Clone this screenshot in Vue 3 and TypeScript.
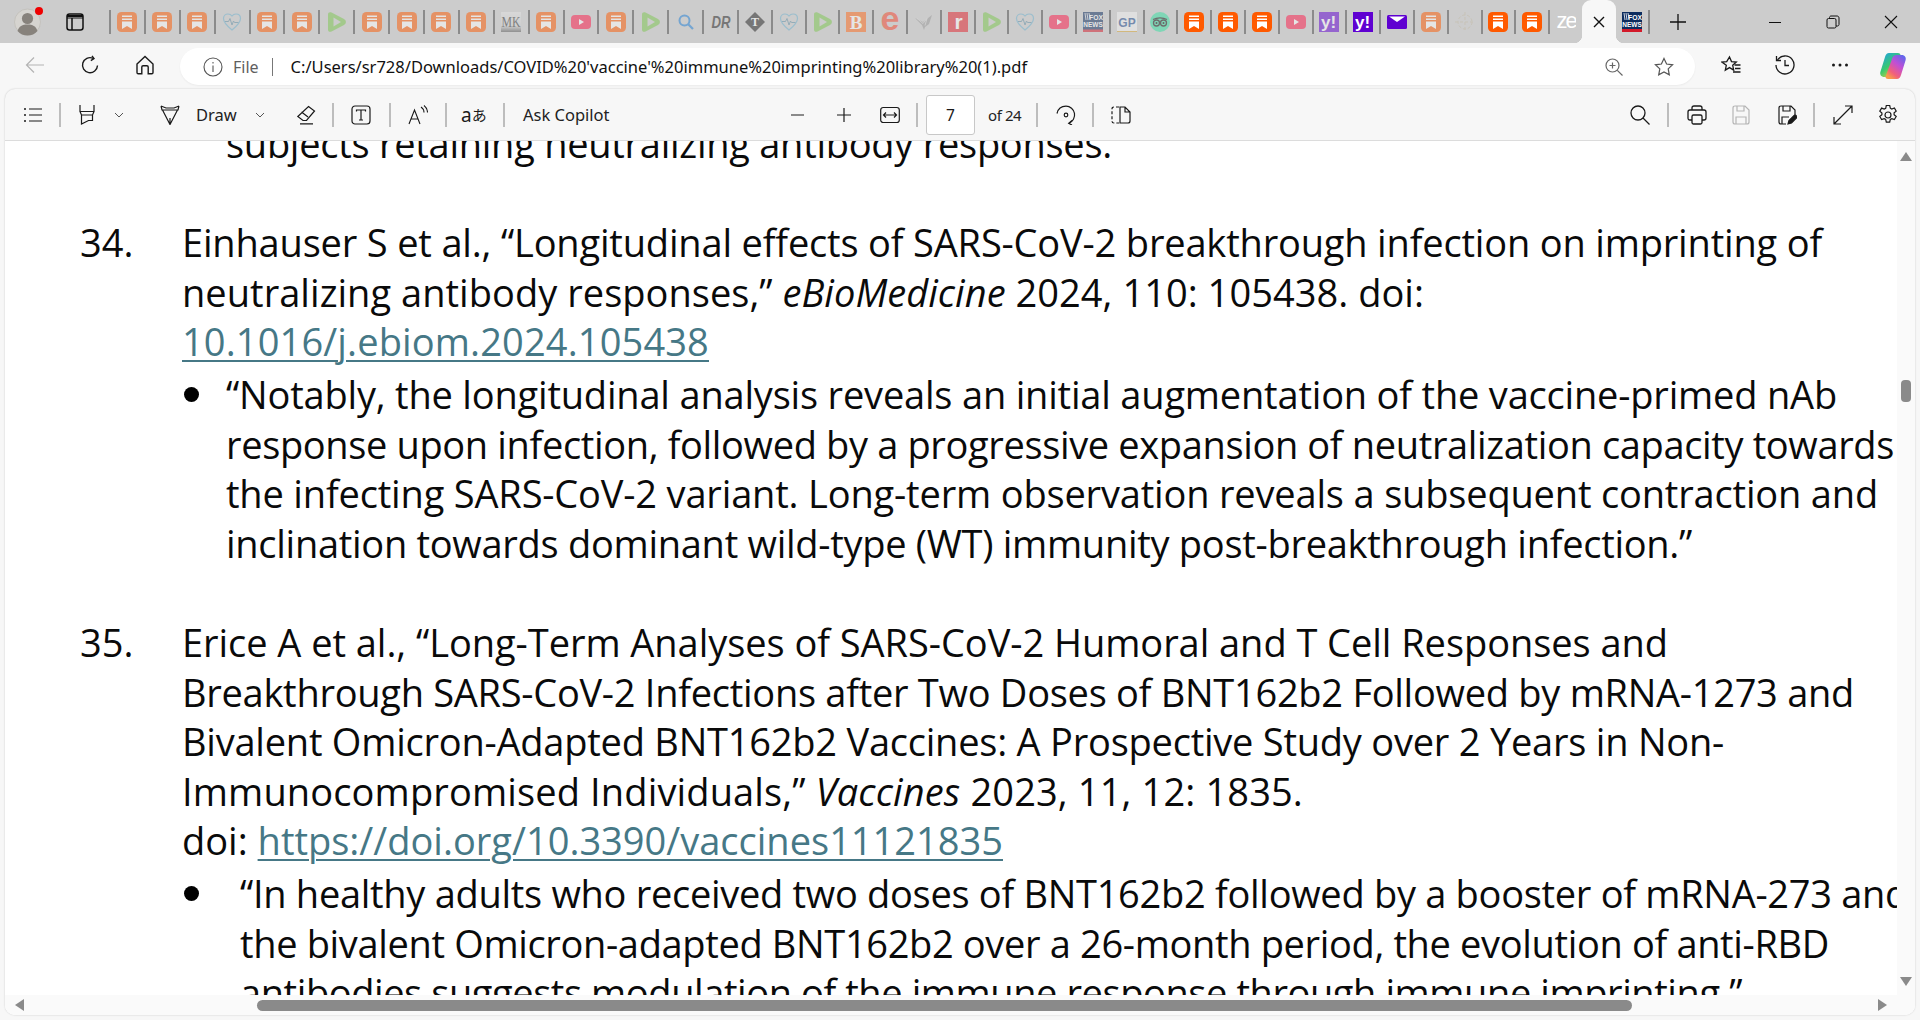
<script setup lang="ts">
import { onMounted, ref } from 'vue'

type Part = { t: string; c?: string }
type Line = { w: number; parts: Part[] }
type Entry = { num: string; lines: Line[]; bullets: Line[]; wide?: boolean }

const tabs: string[] = ['bm','bm','bm','heart','bm','bm','play','bm','bm','bm','bm','mk','bm','yt','bm','play','search','dr','t','heart','play','b','e','bird','r','play','heart','yt','fox','gp','owl','bmh','bmh','bmh','yt','ya','yb','mail','bm','target','bmh','bmh','ze']

const p = (w: number, t: string): Line => ({ w, parts: [{ t }] })

const leadIn: Line = p(886, 'subjects retaining neutralizing antibody responses.')

const entries: Entry[] = [
  {
    num: '34.',
    lines: [
      p(1640, 'Einhauser S et al., “Longitudinal effects of SARS-CoV-2 breakthrough infection on imprinting of'),
      { w: 1242, parts: [{ t: 'neutralizing antibody responses,” ' }, { t: 'eBioMedicine', c: 'em' }, { t: ' 2024, 110: 105438. doi:' }] },
      { w: 527, parts: [{ t: '10.1016/j.ebiom.2024.105438', c: 'link' }] }
    ],
    bullets: [
      p(1611, '“Notably, the longitudinal analysis reveals an initial augmentation of the vaccine-primed nAb'),
      p(1668, 'response upon infection, followed by a progressive expansion of neutralization capacity towards'),
      p(1652, 'the infecting SARS-CoV-2 variant. Long-term observation reveals a subsequent contraction and'),
      p(1466, 'inclination towards dominant wild-type (WT) immunity post-breakthrough infection.”')
    ]
  },
  {
    num: '35.',
    wide: true,
    lines: [
      p(1486, 'Erice A et al., “Long-Term Analyses of SARS-CoV-2 Humoral and T Cell Responses and'),
      p(1672, 'Breakthrough SARS-CoV-2 Infections after Two Doses of BNT162b2 Followed by mRNA-1273 and'),
      p(1542, 'Bivalent Omicron-Adapted BNT162b2 Vaccines: A Prospective Study over 2 Years in Non-'),
      { w: 1121, parts: [{ t: 'Immunocompromised Individuals,” ' }, { t: 'Vaccines', c: 'em' }, { t: ' 2023, 11, 12: 1835.' }] },
      { w: 821, parts: [{ t: 'doi: ' }, { t: 'https://doi.org/10.3390/vaccines11121835', c: 'link' }] }
    ],
    bullets: [
      p(1668, '“In healthy adults who received two doses of BNT162b2 followed by a booster of mRNA-273 and'),
      p(1589, 'the bivalent Omicron-adapted BNT162b2 over a 26-month period, the evolution of anti-RBD'),
      p(1502, 'antibodies suggests modulation of the immune response through immune imprinting.”')
    ]
  }
]

const root = ref<HTMLElement | null>(null)

// Each line of the PDF is set to its measured width on the page.
onMounted(() => {
  root.value?.querySelectorAll<HTMLElement>('[data-w]').forEach((el) => {
    const width = el.getBoundingClientRect().width
    const chars = (el.textContent ?? '').length
    el.style.letterSpacing = `${(Number(el.dataset.w) - width) / chars}px`
  })
})
</script>

<template>
  <div ref="root" class="win">
    <header class="strip">
      <svg class="avatar" width="27" height="28" viewBox="0 0 27 28">
        <circle cx="13.5" cy="14" r="13" fill="#d6d4d0" stroke="#c4c2bd" />
        <circle cx="13.5" cy="10.5" r="5.6" fill="#87827c" />
        <path d="M3.5 23c1.4-5 5-6.6 10-6.6s8.600 1.600 10 6.600c-2.600 3-6 4.500-10 4.500s-7.400-1.500-10-4.500z" fill="#87827c" />
      </svg>
      <span class="red-dot"></span>
      <svg class="tab-actions" width="18" height="18" viewBox="0 0 18 18" fill="none" stroke="#111" stroke-width="1.500">
        <rect x="1" y="1" width="16" height="16" rx="2.500" />
        <path d="M1 3.500h16M1 2.500h16M1 5h16" stroke-width="1.200" />
        <path d="M6 5v12" />
      </svg>

      <div v-for="(k, i) in tabs" :key="i" class="tab" :class="{ narrow: i > 17 }">
        <svg width="20" height="20" viewBox="0 0 20 20" :class="{ dim: !['bmh', 'yb', 'mail', 'ze'].includes(k) }">
          <template v-if="k === 'bm' || k === 'bmh'">
            <rect width="20" height="20" rx="4.500" fill="#ff5a00" />
            <path d="M5 3.500h10V5H5zM5 6.500h10V8H5zM5 9.500h10V17l-5-3-5 3z" fill="#fff" />
          </template>
          <template v-else-if="k === 'heart'">
            <path d="M10 18C5 14 1.500 10.500 1.500 6.500 1.500 3.500 3.700 2 6 2c1.800 0 3.100.800 4 2 .900-1.200 2.200-2 4-2 2.300 0 4.500 1.500 4.500 4.500C18.500 10.500 15 14 10 18z" fill="none" stroke="#6db2cf" stroke-width="1.200" />
            <path d="M3 9.500h3.500l1.500-3 2 6.500 1.500-4 1 1.500h4" fill="none" stroke="#5d8ea5" stroke-width="1" />
          </template>
          <template v-else-if="k === 'play'">
            <path d="M1 2.500C1 .500 2.500-.3 4.500.500L17 7c2.500 1.500 2.500 4.500 0 6L4.500 19.500c-2 .800-3.500 0-3.500-2z" fill="#7cc74e" />
            <path d="M6.500 5.500 14 10l-7.500 4.500z" fill="#ccc" />
          </template>
          <template v-else-if="k === 'mk'">
            <rect width="20" height="20" fill="url(#mkg)" />
            <defs><linearGradient id="mkg" x1="0" y1="0" x2="0" y2="1"><stop offset="0" stop-color="#e4e4e4" /><stop offset=".7" stop-color="#cfcfcf" /><stop offset="1" stop-color="#555" /></linearGradient></defs>
            <text x="10" y="15" text-anchor="middle" class="ic-serif" font-size="15" textLength="19" lengthAdjust="spacingAndGlyphs" fill="#333">MK</text>
          </template>
          <template v-else-if="k === 'yt'">
            <rect y="3" width="20" height="14" rx="4" fill="#ff1a4a" />
            <path d="M8 7l5 3-5 3z" fill="#fff" />
          </template>
          <template v-else-if="k === 'search'">
            <circle cx="8.500" cy="8.500" r="5" fill="none" stroke="#1f7fd6" stroke-width="2" />
            <path d="M12 12l5 5" stroke="#1f7fd6" stroke-width="2.200" />
          </template>
          <template v-else-if="k === 'dr'">
            <text x="10" y="16" text-anchor="middle" class="ic-bold ic-i" font-size="16" textLength="19" lengthAdjust="spacingAndGlyphs" fill="#222">DR</text>
          </template>
          <template v-else-if="k === 't'">
            <path d="M10 0l10 10-10 10L0 10z" fill="#222" />
            <text x="10" y="14" text-anchor="middle" class="ic-serif" font-size="12" font-weight="700" fill="#fff">T</text>
          </template>
          <template v-else-if="k === 'b'">
            <rect width="20" height="20" fill="#ff6a1a" />
            <text x="10" y="16.500" text-anchor="middle" class="ic-serif" font-size="19" font-weight="700" fill="#fff">B</text>
          </template>
          <template v-else-if="k === 'e'">
            <text x="10" y="18" text-anchor="middle" class="ic-bold" font-size="34" fill="#f4472d">e</text>
          </template>
          <template v-else-if="k === 'bird'">
            <path d="M1 6l8 4 9-7-3 9-4 3-1 3-2-5z" fill="#999" />
            <path d="M3 6.500l6 5 4-5-2 7" fill="none" stroke="#ddd" stroke-width=".8" />
          </template>
          <template v-else-if="k === 'r'">
            <rect width="20" height="20" fill="#e3222c" />
            <text x="10.500" y="17" text-anchor="middle" class="ic-bold" font-size="21" fill="#fff">r</text>
          </template>
          <template v-else-if="k === 'fox'">
            <rect width="20" height="20" fill="#0d2c5e" />
            <rect y="17.500" width="20" height="2.500" fill="#d31a2a" />
            <path d="M2 1l1 7M4 1l1 7M6 1l1 6" stroke="#fff" stroke-width=".8" />
            <text x="13" y="8" text-anchor="middle" class="ic-bold" font-size="6.800" fill="#fff">FOX</text>
            <text x="10" y="15" text-anchor="middle" class="ic-bold" font-size="6.500" fill="#fff">NEWS</text>
          </template>
          <template v-else-if="k === 'gp'">
            <rect width="20" height="20" fill="#f2f2f2" />
            <path d="M0 19h20v1H0z" fill="#d9a630" />
            <text x="10" y="15" text-anchor="middle" class="ic-bold" font-size="12" fill="#1d4a8f">GP</text>
          </template>
          <template v-else-if="k === 'owl'">
            <circle cx="10" cy="10" r="10" fill="#34e0a1" />
            <circle cx="6.500" cy="11" r="3" fill="none" stroke="#111" stroke-width="1.300" />
            <circle cx="13.500" cy="11" r="3" fill="none" stroke="#111" stroke-width="1.300" />
            <path d="M3 7.500c4-2 10-2 14 0" fill="none" stroke="#111" stroke-width="1.300" />
            <circle cx="6.500" cy="11" r="1" /><circle cx="13.500" cy="11" r="1" />
          </template>
          <template v-else-if="k === 'ya' || k === 'yb'">
            <rect width="20" height="20" fill="#5f01d1" />
            <text x="9.500" y="15.500" text-anchor="middle" class="ic-bold" font-size="17" fill="#fff">y!</text>
          </template>
          <template v-else-if="k === 'mail'">
            <rect y="3" width="20" height="14" rx="1.500" fill="#5f01d1" />
            <path d="M2 4.500h16L10 10z" fill="#fff" />
          </template>
          <template v-else-if="k === 'target'">
            <g fill="none" stroke="#c5bca5" stroke-width="1" stroke-dasharray="3 2">
              <circle cx="10" cy="10" r="7" />
              <path d="M10 0v20M0 10h20" />
            </g>
          </template>
          <template v-else-if="k === 'ze'">
            <text x="10" y="16" text-anchor="middle" class="ic-sans" font-size="22" letter-spacing="-2" fill="#fff">ze</text>
          </template>
        </svg>
      </div>

      <div class="active-tab">
        <svg width="14" height="14" viewBox="0 0 14 14" stroke="#111" stroke-width="1.400"><path d="M2 2l10 10M12 2L2 12" /></svg>
      </div>
      <div class="tab last">
        <svg width="20" height="20" viewBox="0 0 20 20">
          <rect width="20" height="20" fill="#0d2c5e" />
          <rect y="17" width="20" height="3" fill="#d31a2a" />
          <path d="M2 1l1 7M4 1l1 7M6 1l1 6" stroke="#fff" stroke-width=".8" />
          <text x="13" y="8" text-anchor="middle" class="ic-bold" font-size="6.800" fill="#fff">FOX</text>
          <text x="10" y="15" text-anchor="middle" class="ic-bold" font-size="6.500" fill="#fff">NEWS</text>
        </svg>
      </div>
      <svg class="plus" width="18" height="18" viewBox="0 0 18 18" stroke="#111" stroke-width="1.300"><path d="M9 1v16M1 9h16" /></svg>
      <div class="win-ctl">
        <button><svg width="14" height="14" viewBox="0 0 14 14" stroke="#111"><path d="M1 7.500h12" /></svg></button>
        <button><svg width="14" height="14" viewBox="0 0 14 14" fill="none" stroke="#111"><rect x="1" y="3.500" width="9" height="9.500" rx="1.500" /><path d="M3.500 3.500V2.500c0-.8.700-1.500 1.500-1.500h6c1 0 2 .700 2 2v6.500c0 .8-.700 1.500-1.500 1.500H10" /></svg></button>
        <button><svg width="14" height="14" viewBox="0 0 14 14" stroke="#111" stroke-width="1.100"><path d="M1 1l12 12M13 1L1 13" /></svg></button>
      </div>
    </header>

    <nav class="addr">
      <svg class="ai" width="20" height="20" viewBox="0 0 20 20" fill="none" stroke="#b4b4b4" stroke-width="1.200"><path d="M19 10H1.500M9 2.500 1.500 10 9 17.500" /></svg>
      <svg class="ai gap" width="20" height="20" viewBox="0 0 20 20" fill="none" stroke="#1a1a1a" stroke-width="1.400"><path d="M17.500 10.500A7.500 7.500 0 1 1 13 3.300" /><path d="M12 .800 14 3.500 10.800 5.600" /></svg>
      <svg class="ai gap" width="20" height="20" viewBox="0 0 20 20" fill="none" stroke="#1a1a1a" stroke-width="1.400"><path d="M2 9l8-7.500L18 9v8.500c0 .8-.5 1.200-1.200 1.200h-3.600V12c0-.8-.5-1.300-1.300-1.300H8.100c-.8 0-1.300.5-1.300 1.300v6.700H3.200c-.7 0-1.200-.4-1.200-1.200z" /></svg>
      <div class="pill">
        <svg width="20" height="20" viewBox="0 0 20 20" fill="none" stroke="#555" stroke-width="1.100"><circle cx="10" cy="10" r="9" /><path d="M10 8.500V15M10 5v1.500" /></svg>
        <span class="file">File</span>
        <span class="pill-sep"></span>
        <span class="url">C:/Users/sr728/Downloads/COVID%20'vaccine'%20immune%20imprinting%20library%20(1).pdf</span>
        <svg class="zoom-ic" width="18" height="18" viewBox="0 0 18 18" fill="none" stroke="#666" stroke-width="1.200"><circle cx="7.500" cy="7.500" r="6.500" /><path d="M12.300 12.300 17.500 17.500M7.500 4.500v6M4.500 7.500h6" /></svg>
        <svg class="star-ic" width="20" height="20" viewBox="0 0 20 20" fill="none" stroke="#555" stroke-width="1.200"><path d="M10 1.500l2.600 5.500 6 .8-4.400 4.100 1.100 6L10 15l-5.300 2.900 1.100-6L1.400 7.800l6-.8z" /></svg>
      </div>
      <svg class="fav" width="20" height="20" viewBox="0 0 20 20" fill="none" stroke="#1a1a1a" stroke-width="1.300"><path d="M8.500 2l2 4.600 4.800.5-3.600 3.200 1 4.800-4.200-2.500-4.200 2.500 1-4.800L.8 7.100l4.900-.5z" /><path d="M13.500 10h6M14 13.500h5.500M12 17h7.500" /></svg>
      <svg class="hist" width="20" height="20" viewBox="0 0 20 20" fill="none" stroke="#1a1a1a" stroke-width="1.300"><path d="M2.500 5A9 9 0 1 1 1 10" /><path d="M1.500 1v4.500H6M10 5v5.500h4" /></svg>
      <svg class="dots" width="20" height="20" viewBox="0 0 20 20" fill="#1a1a1a"><circle cx="3.500" cy="10" r="1.500" /><circle cx="10" cy="10" r="1.500" /><circle cx="16.500" cy="10" r="1.500" /></svg>
      <svg class="copilot" width="28" height="28" viewBox="0 0 28 28">
        <defs>
          <linearGradient id="cpa" x1="0" y1="0" x2=".7" y2="1"><stop offset="0" stop-color="#1f9cf0" /><stop offset=".55" stop-color="#38c96e" /><stop offset="1" stop-color="#f4d03a" /></linearGradient>
          <linearGradient id="cpb" x1="1" y1="0" x2=".3" y2="1"><stop offset="0" stop-color="#4a6cf0" /><stop offset=".45" stop-color="#c04fd6" /><stop offset=".8" stop-color="#f2607a" /><stop offset="1" stop-color="#f79b4b" /></linearGradient>
        </defs>
        <path d="M10 1h9c1.500 0 2.200.8 2.600 2L15 21c-.7 2.500-2 4-5 4H5.500C2 25 .500 22.500 1.500 19.500L6 5c.8-2.500 2-4 4-4z" fill="url(#cpa)" />
        <path d="M18 27H9c-1.500 0-2.200-.8-2.600-2L13 7c.7-2.500 2-4 5-4h4.500c3.500 0 5 2.500 4 5.500L22 23c-.8 2.500-2 4-4 4z" fill="url(#cpb)" />
      </svg>
    </nav>

    <main class="card">
      <div class="bar">
        <svg class="t-list" viewBox="0 0 20 20" fill="#1a1a1a"><circle cx="2" cy="4" r="1" /><circle cx="2" cy="10" r="1" /><circle cx="2" cy="16" r="1" /><path d="M6 3.500h13v1H6zM6 9.500h13v1H6zM6 15.500h13v1H6z" /></svg>
        <i class="sep s1"></i>
        <svg class="t-hl" viewBox="0 0 20 20" fill="none" stroke="#1a1a1a" stroke-width="1.200"><path d="M3 0v6.500h14V0M3 6.500l1.500 3.500h11L17 6.500M4.500 10v9l7-3.500h4V10" /></svg>
        <svg class="t-chev" viewBox="0 0 10 10" fill="none" stroke="#555"><path d="M1 3l4 4 4-4" /></svg>
        <svg class="t-draw" viewBox="0 0 20 20" fill="none" stroke="#1a1a1a" stroke-width="1.200"><path d="M1 1l5 2h8l5-2M1 1l1 4h16l1-4M2.500 5L10 19.500 17.500 5M10 19.500V13" /></svg>
        <span class="lab t-lab">Draw</span>
        <svg class="t-chev2" viewBox="0 0 10 10" fill="none" stroke="#555"><path d="M1 3l4 4 4-4" /></svg>
        <svg class="t-er" viewBox="0 0 20 20" fill="none" stroke="#1a1a1a" stroke-width="1.200"><path d="M12.500 1.500 18.500 6l-8 9.500H7L1.800 11.500zM5.500 7 12 12M4 18.800h13" /></svg>
        <i class="sep s2"></i>
        <svg class="t-tx" viewBox="0 0 20 20" fill="none" stroke="#1a1a1a" stroke-width="1.200"><rect x="1" y="1" width="18" height="18" rx="3" /><path d="M5.500 6.500V5h9v1.500M10 5v10M8 15h4" /></svg>
        <i class="sep s3"></i>
        <svg class="t-read" viewBox="0 0 20 20" fill="none" stroke="#1a1a1a" stroke-width="1.100"><path d="M1 19 6.500 5 12 19M3 14h7M13 2c2 1.300 3 3 3 5.500M16 .5c2.500 2 3.500 4.500 3.500 7" /></svg>
        <i class="sep s4"></i>
        <span class="t-tr"><span class="tr-a">a</span><span class="tr-j">あ</span></span>
        <i class="sep s5"></i>
        <span class="lab t-ask">Ask Copilot</span>
        <svg class="t-min" viewBox="0 0 20 20" stroke="#666" stroke-width="1.300"><path d="M3 10h13" /></svg>
        <svg class="t-plus" viewBox="0 0 20 20" stroke="#1a1a1a" stroke-width="1.200"><path d="M3 10h14M10 3v14" /></svg>
        <svg class="t-fit" viewBox="0 0 20 20" fill="none" stroke="#1a1a1a" stroke-width="1.200"><rect x=".7" y="2.500" width="18.600" height="15" rx="2.500" /><path d="M3.500 10h13M6 7.500 3.500 10 6 12.500M14 7.500l2.500 2.500-2.500 2.500" /></svg>
        <i class="sep s6"></i>
        <div class="page-box">7</div>
        <span class="lab t-of">of 24</span>
        <i class="sep s7"></i>
        <svg class="t-rot" viewBox="0 0 20 20" fill="none" stroke="#1a1a1a" stroke-width="1.200"><path d="M1 8.500C2 4 5.500 1.200 10 1.200a8.800 8.800 0 0 1 3 17" /><circle cx="10" cy="10" r="1.800" /><path d="M16 15.500l-3.300 2.800 3.300 1.700" /></svg>
        <i class="sep s8"></i>
        <svg class="t-two" viewBox="0 0 20 20" fill="none" stroke="#1a1a1a" stroke-width="1.200"><path d="M8 2H3Q1 2 1 4v12q0 2 2 2h5" stroke-dasharray="3 2" /><path d="M9 2h5l5 5v9q0 2-2 2H9zM14 2v5h5" /></svg>
        <div class="bar-right">
          <svg class="t-find" viewBox="0 0 20 20" fill="none" stroke="#1a1a1a" stroke-width="1.300"><circle cx="8" cy="8" r="7" /><path d="M13 13l6.500 6.500" /></svg>
          <i class="sep s9"></i>
          <svg class="t-print" viewBox="0 0 20 20" fill="none" stroke="#1a1a1a" stroke-width="1.300"><path d="M5 5V3q0-2 2-2h6q2 0 2 2v2M5 15H3q-2 0-2-2V7q0-2 2-2h14q2 0 2 2v6q0 2-2 2h-2" /><rect x="5" y="10" width="10" height="9" rx="1.500" /></svg>
          <svg class="t-save" viewBox="0 0 20 20" fill="none" stroke="#b5b5b5" stroke-width="1.200"><path d="M2 3q0-2 2-2h10l4 4v12q0 2-2 2H4q-2 0-2-2zM6 1v5h7V1M5 19v-7h10v7" /></svg>
          <svg class="t-saveas" viewBox="0 0 20 20" fill="none" stroke="#1a1a1a" stroke-width="1.200"><path d="M9 19H4q-2 0-2-2V3q0-2 2-2h10l4 4v4M6 1v5h7V1M5 19v-7h7" /><path d="M11 19l1-3.500 6-6 2.500 2.500-6 6z" fill="#1a1a1a" /></svg>
          <i class="sep s10"></i>
          <svg class="t-exp" viewBox="0 0 20 20" fill="none" stroke="#1a1a1a" stroke-width="1.200"><path d="M19 8V1h-7M19 1 1 19M1 12v7h7" /></svg>
          <svg class="t-gear" viewBox="0 0 20 20" fill="none" stroke="#1a1a1a" stroke-width="1.200"><circle cx="10" cy="10" r="3" /><path d="M8.300 .5h3.400l.6 2.700 1.500.8 2.600-1 1.800 3.100-2.100 1.800v1.800l2.100 1.800-1.800 3.100-2.600-1-1.500.8-.6 2.700H8.300l-.6-2.700-1.500-.8-2.600 1-1.800-3.100 2.100-1.800V8l-2.100-1.800 1.800-3.100 2.600 1 1.500-.8z" /></svg>
        </div>
      </div>

      <div class="view">
        <div class="doc">
          <div class="pdf">
            <div class="body lead">
              <div class="line"><span class="fit" :data-w="leadIn.w">{{ leadIn.parts[0].t }}</span></div>
            </div>
            <section v-for="e in entries" :key="e.num" class="entry">
              <span class="num">{{ e.num }}</span>
              <div class="body">
                <div v-for="(l, i) in e.lines" :key="i" class="line">
                  <span class="fit" :data-w="l.w"><span v-for="(s, j) in l.parts" :key="j" :class="s.c">{{ s.t }}</span></span>
                </div>
                <div class="bullets" :class="{ wide: e.wide }">
                  <span class="dot"></span>
                  <div>
                    <div v-for="(l, i) in e.bullets" :key="i" class="line">
                      <span class="fit" :data-w="l.w">{{ l.parts[0].t }}</span>
                    </div>
                  </div>
                </div>
              </div>
            </section>
          </div>
          <aside class="vbar">
            <svg width="12" height="9" viewBox="0 0 12 9" fill="#8a8a8a"><path d="M6 0l6 9H0z" /></svg>
            <span class="vthumb"></span>
            <svg width="12" height="9" viewBox="0 0 12 9" fill="#8a8a8a"><path d="M6 9 0 0h12z" /></svg>
          </aside>
        </div>
        <div class="hbar">
          <svg width="9" height="12" viewBox="0 0 9 12" fill="#8a8a8a"><path d="M0 6l9-6v12z" /></svg>
          <span class="hthumb"></span>
          <svg width="9" height="12" viewBox="0 0 9 12" fill="#8a8a8a"><path d="M9 6 0 12V0z" /></svg>
        </div>
      </div>
    </main>
  </div>
</template>

<style>
html, body { margin: 0; background: #f7f7f7; }
</style>

<style scoped>
.win {
  width: 1920px;
  height: 1020px;
  display: flex;
  flex-direction: column;
  overflow: hidden;
  background: #f7f7f7;
  font-family: "Noto Sans", "Open Sans", sans-serif;
  color: #1a1a1a;
}

.strip {
  height: 43px;
  flex: none;
  background: #cccccc;
  display: flex;
  align-items: center;
  position: relative;
}
.avatar { margin-left: 14px; flex: none; }
.red-dot {
  position: absolute;
  left: 35px;
  top: 7px;
  width: 8px;
  height: 8px;
  border-radius: 50%;
  background: #ee0000;
}
.tab-actions { margin-left: 25px; flex: none; }
.tab {
  width: 34.9px;
  height: 24px;
  flex: none;
  box-sizing: border-box;
  border-left: 2px solid #8b8b8b;
  display: flex;
  align-items: center;
  justify-content: center;
}
.tab-actions + .tab { margin-left: 25px; }
.tab.narrow { width: 33.8px; }
.dim { opacity: 0.5; }
.ic-serif { font-family: "Liberation Serif", serif; }
.ic-bold { font-family: "Liberation Sans", sans-serif; font-weight: 700; }
.ic-sans { font-family: "Liberation Sans", sans-serif; }
.ic-i { font-style: italic; }

.active-tab {
  width: 34px;
  height: 43px;
  flex: none;
  align-self: flex-end;
  background: #f7f7f7;
  border-radius: 9px 9px 0 0;
  display: flex;
  align-items: center;
  justify-content: center;
  position: relative;
}
.active-tab::before, .active-tab::after {
  content: "";
  position: absolute;
  bottom: 0;
  width: 8px;
  height: 8px;
}
.active-tab::before { left: -8px; background: radial-gradient(circle at 0 0, transparent 8px, #f7f7f7 8.500px); }
.active-tab::after { right: -8px; background: radial-gradient(circle at 100% 0, transparent 8px, #f7f7f7 8.500px); }
.tab.last {
  border-left: 0;
  border-right: 2px solid #8b8b8b;
  width: 34px;
}
.plus { margin-left: 19px; flex: none; }
.win-ctl { margin-left: auto; display: flex; align-self: stretch; }
.win-ctl button {
  width: 58px;
  border: 0;
  background: none;
  padding: 0;
  display: flex;
  align-items: center;
  justify-content: center;
}

.addr {
  height: 46px;
  flex: none;
  display: flex;
  align-items: flex-start;
  padding-left: 25px;
  box-sizing: border-box;
}
.addr > svg { margin-top: 12px; flex: none; }
.ai.gap { margin-left: 35px; }
.pill {
  width: 1515px;
  height: 37px;
  margin: 5px 0 0 25px;
  background: #fff;
  border-radius: 19px;
  display: flex;
  align-items: center;
  padding: 0 21px 0 23px;
  box-sizing: border-box;
  flex: none;
  box-shadow: 0 1px 2px rgba(0, 0, 0, 0.05);
}
.file { margin-left: 10px; font-size: 16px; color: #5f5f5f; }
.pill-sep { width: 1px; height: 18px; background: #777; margin-left: 13px; }
.url { margin-left: 18px; font-size: 16.500px; color: #111; white-space: nowrap; }
.zoom-ic { margin-left: auto; }
.star-ic { margin-left: 31px; }
.addr > .fav { margin-left: 26px; }
.addr > .hist { margin-left: 34px; }
.addr > .dots { margin-left: 35px; }
.addr > .copilot { margin: 9px 0 0 29px; }

.card {
  flex: 1;
  min-height: 0;
  margin: 0 5px 5px;
  background: #f7f7f7;
  border-radius: 10px;
  box-shadow: 0 0 2px rgba(0, 0, 0, 0.2);
  display: flex;
  flex-direction: column;
  overflow: hidden;
}
.bar {
  height: 52px;
  flex: none;
  display: flex;
  align-items: center;
  border-bottom: 1px solid #dcdcdc;
  box-sizing: border-box;
}
.bar svg { width: 20px; height: 20px; flex: none; }
.bar .t-chev, .bar .t-chev2 { width: 10px; height: 10px; }
.lab { font-size: 16.500px; color: #222; white-space: nowrap; }
.sep { width: 2px; height: 24px; background: #bdbdbd; flex: none; margin-left: 16px; }
.t-list { margin-left: 18px; }
.t-hl { margin-left: 16px; }
.t-chev { margin-left: 17px; }
.t-draw { margin-left: 36px; }
.t-lab { margin-left: 16px; width: 40px; }
.t-chev2 { margin-left: 19px; }
.t-er { margin-left: 31px; }
.t-tx { margin-left: 17px; }
.s3 { margin-left: 18px; }
.t-read { margin-left: 17px; }
.s4 { margin-left: 17px; }
.t-tr { margin-left: 14px; width: 27px; font-size: 19px; display: flex; flex: none; align-items: center; }
.tr-j { font-family: "Noto Sans CJK JP", sans-serif; font-size: 15px; }
.s5 { margin-left: 15px; }
.t-ask { margin-left: 18px; width: 87px; }
.t-min { margin-left: 178px; }
.t-plus { margin-left: 26px; }
.t-fit { margin-left: 26px; }
.page-box {
  width: 49px;
  height: 40px;
  margin-left: 8px;
  flex: none;
  box-sizing: border-box;
  border: 1px solid #c8c8c8;
  border-radius: 3px;
  background: #fff;
  font-size: 15.500px;
  display: flex;
  align-items: center;
  justify-content: center;
}
.t-of { margin-left: 13px; width: 33px; font-size: 15px; letter-spacing: -0.400px; }
.s7 { margin-left: 15px; }
.t-rot { margin-left: 18px; }
.t-two { margin-left: 17px; }
.bar-right { margin-left: auto; padding-right: 17px; display: flex; align-items: center; }
.s9 { margin-left: 17px; }
.t-print { margin-left: 18px; }
.t-save { margin-left: 24px; }
.t-saveas { margin-left: 26px; }
.t-exp { margin-left: 18px; }
.t-gear { margin-left: 25px; }

.view { flex: 1; min-height: 0; display: flex; flex-direction: column; background: #fff; }
.doc { flex: 1; min-height: 0; display: flex; }
.pdf {
  flex: 1;
  min-width: 0;
  overflow: hidden;
  background: #fff;
  padding-left: 75px;
  font-family: "Open Sans", sans-serif;
  font-size: 38px;
  line-height: 49.600px;
  color: #0a0a0a;
  white-space: nowrap;
}
.lead { margin: -22px 0 0 146px; }
.entry { display: flex; margin-top: 49.600px; }
.num { width: 102px; flex: none; }
.line { height: 49.600px; }
.fit { display: inline-block; }
.em { font-style: italic; }
.link { color: #467886; text-decoration: underline; text-decoration-thickness: 2px; text-underline-offset: 4px; }
.bullets { display: flex; margin-top: 3px; }
.dot {
  width: 15px;
  height: 15px;
  flex: none;
  margin: 17px 27px 0 2px;
  border-radius: 50%;
  background: #000;
}
.bullets.wide .dot { margin-right: 41px; }

.vbar {
  width: 18px;
  flex: none;
  background: #fafafa;
  display: flex;
  flex-direction: column;
  align-items: center;
  padding: 11px 0 9px;
  box-sizing: border-box;
}
.vthumb { width: 10px; height: 22px; border-radius: 4px; background: #8a8a8a; margin-top: 219px; }
.vbar svg:last-child { margin-top: auto; }
.hbar {
  height: 20px;
  flex: none;
  background: #fafafa;
  display: flex;
  align-items: center;
  padding: 0 28px 0 10px;
  box-sizing: border-box;
}
.hthumb { width: 1375px; height: 11px; border-radius: 5.500px; background: #8a8a8a; margin-left: 233px; }
.hbar svg:last-child { margin-left: auto; }
</style>
